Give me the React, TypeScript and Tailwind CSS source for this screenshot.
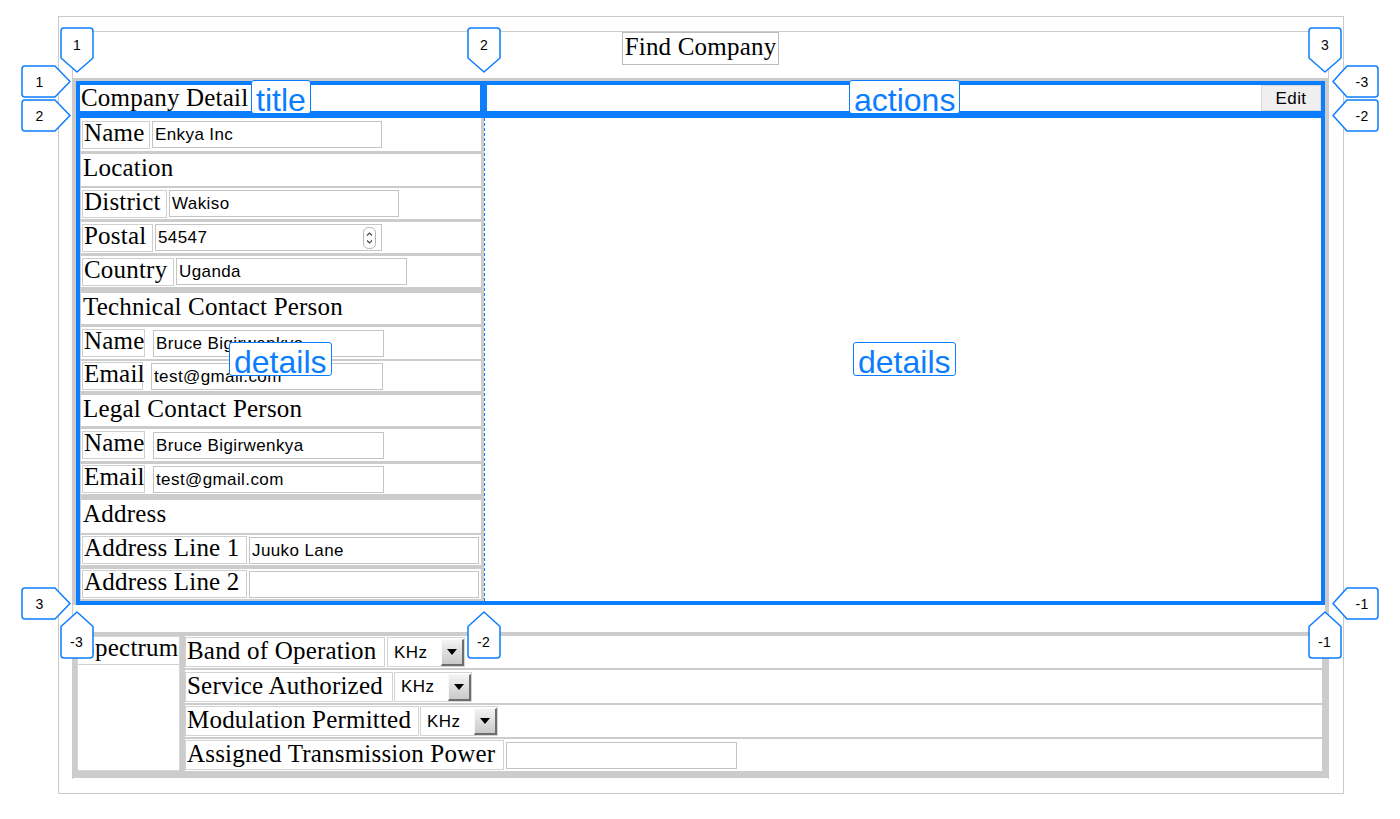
import React from 'react';

const SANS = "[font-family:'Liberation_Sans',Arial,sans-serif]";

type Row =
  | { kind: 'head'; label: string; box: string }
  | {
      kind: 'field';
      label: string;
      value: string;
      box: string;
      lw: string;
      gap: string;
      iw: string;
      spin?: boolean;
    };

const rows: Row[] = [
  { kind: 'field', label: 'Name', value: 'Enkya Inc', box: 'h-[33px]', lw: 'w-[68px]', gap: 'ml-[2px]', iw: 'w-[230px]' },
  { kind: 'head', label: 'Location', box: 'mt-[3px] h-[32px]' },
  { kind: 'field', label: 'District', value: 'Wakiso', box: 'mt-[2px] h-[31px]', lw: 'w-[85px]', gap: 'ml-[2px]', iw: 'w-[230px]' },
  { kind: 'field', label: 'Postal', value: '54547', box: 'mt-[3px] h-[31px]', lw: 'w-[71px]', gap: 'ml-[2px]', iw: 'w-[227px]', spin: true },
  { kind: 'field', label: 'Country', value: 'Uganda', box: 'mt-[3px] h-[31px]', lw: 'w-[92px]', gap: 'ml-[2px]', iw: 'w-[231px]' },
  { kind: 'head', label: 'Technical Contact Person', box: 'mt-[6px] h-[31px]' },
  { kind: 'field', label: 'Name', value: 'Bruce Bigirwenkya', box: 'mt-[3px] h-[32px]', lw: 'w-[63px]', gap: 'ml-[8px]', iw: 'w-[231px]' },
  { kind: 'field', label: 'Email', value: 'test@gmail.com', box: 'mt-[2px] h-[30px]', lw: 'w-[61px]', gap: 'ml-[8px]', iw: 'w-[232px]' },
  { kind: 'head', label: 'Legal Contact Person', box: 'mt-[4px] h-[31px]' },
  { kind: 'field', label: 'Name', value: 'Bruce Bigirwenkya', box: 'mt-[3px] h-[32px]', lw: 'w-[63px]', gap: 'ml-[8px]', iw: 'w-[231px]' },
  { kind: 'field', label: 'Email', value: 'test@gmail.com', box: 'mt-[3px] h-[30px]', lw: 'w-[63px]', gap: 'ml-[8px]', iw: 'w-[231px]' },
  { kind: 'head', label: 'Address', box: 'mt-[6px] h-[33px]' },
  { kind: 'field', label: 'Address Line 1', value: 'Juuko Lane', box: 'mt-[2px] h-[30px]', lw: 'w-[165px]', gap: 'ml-[2px]', iw: 'w-[230px]' },
  { kind: 'field', label: 'Address Line 2', value: '', box: 'mt-[4px] h-[30px]', lw: 'w-[165px]', gap: 'ml-[2px]', iw: 'w-[230px]' },
];

const spectrum = [
  { label: 'Band of Operation', box: 'h-[32px]', lw: 'w-[200px]', gap: 'ml-[2px]', select: true },
  { label: 'Service Authorized', box: 'h-[33px]', lw: 'w-[208px]', gap: 'ml-[1px]', select: true },
  { label: 'Modulation Permitted', box: 'h-[32px]', lw: 'w-[234px]', gap: 'ml-[1px]', select: true },
  { label: 'Assigned Transmission Power', box: 'h-[32px]', lw: 'w-[319px]', gap: 'ml-[2px]', select: false },
];

function Spinner() {
  return (
    <svg width="13" height="22" viewBox="0 0 13 22" className="mr-[5px]">
      <rect x="0.5" y="0.5" width="12" height="21" rx="5" fill="white" stroke="#b5b5b5" />
      <path d="M4 8.5L6.5 6L9 8.5" fill="none" stroke="#444" strokeWidth="1.1" />
      <path d="M4 13.5L6.5 16L9 13.5" fill="none" stroke="#444" strokeWidth="1.1" />
    </svg>
  );
}

function Select() {
  return (
    <div className={`w-[78px] h-[30px] bg-white border border-[#d4d4d4] flex items-end justify-between ${SANS}`}>
      <span className="self-center pl-[6px] text-[17px] leading-[19px] tracking-[0.4px]">KHz</span>
      <div className="w-[23px] h-[27px] flex items-center justify-center bg-[linear-gradient(#f3f3f3,#c9c9c9)] border-l border-t border-[#fafafa] border-r-2 border-b-2 border-r-[#6d6d6d] border-b-[#6d6d6d]">
        <svg width="10" height="6" viewBox="0 0 10 6">
          <path d="M0 0H10L5 6Z" fill="#000" />
        </svg>
      </div>
    </div>
  );
}

type Dir = 'down' | 'up' | 'left' | 'right';

function Badge({ n, dir, pos }: { n: string; dir: Dir; pos: string }) {
  const stroke = { fill: 'white', stroke: '#0b7dff', strokeWidth: 1.5, strokeLinejoin: 'round' as const };
  const txt = { fontSize: 14, fontFamily: 'Liberation Sans, Arial, sans-serif', fill: '#000', textAnchor: 'middle' as const };
  if (dir === 'down')
    return (
      <svg className={`absolute ${pos}`} width="34" height="46" viewBox="0 0 34 46">
        <path d="M1 4Q1 1 4 1H30Q33 1 33 4V31L17 45L1 31Z" {...stroke} />
        <text x="17" y="23" {...txt}>{n}</text>
      </svg>
    );
  if (dir === 'up')
    return (
      <svg className={`absolute ${pos}`} width="34" height="49" viewBox="0 0 34 49">
        <path d="M17 1L33 15.5V44Q33 47 30 47H4Q1 47 1 44V15.5Z" {...stroke} />
        <text x="16.5" y="36" {...txt}>{n}</text>
      </svg>
    );
  if (dir === 'right')
    return (
      <svg className={`absolute ${pos}`} width="51" height="34" viewBox="0 0 51 34">
        <path d="M4 1H34L49 16.5L34 32H4Q1 32 1 29V4Q1 1 4 1Z" {...stroke} />
        <text x="18.5" y="22" {...txt}>{n}</text>
      </svg>
    );
  return (
    <svg className={`absolute ${pos}`} width="49" height="34" viewBox="0 0 49 34">
      <path d="M2 16.5L16 1H44Q47 1 47 4V29Q47 32 44 32H16Z" {...stroke} />
      <text x="31" y="22" {...txt}>{n}</text>
    </svg>
  );
}

function AreaTag({ text, pos }: { text: string; pos: string }) {
  return (
    <div
      className={`absolute ${pos} h-[34px] px-[4px] bg-white border border-[#0b7dff] rounded-[3px] text-[32px] leading-[38px] tracking-normal text-[#0b7dff] whitespace-nowrap ${SANS}`}
    >
      {text}
    </div>
  );
}

export default function App() {
  return (
    <div className="relative w-[1400px] h-[819px] bg-white overflow-hidden text-black tracking-[0.2px] [font-family:'Liberation_Serif','Times_New_Roman',serif]">
      <div className="ml-[58px] mt-[16px] w-[1286px] h-[778px] border border-[#c9c9c9] pt-[14px] pl-[13px] pr-[14px] pb-[14px]">
        <div className="h-full border-x border-t border-[#cccccc] flex flex-col">
          {/* header */}
          <div className="h-[46px] flex justify-center items-start">
            <div className="h-[33px] border border-[#bcbcbc] px-[2px] text-[25px] leading-[27px]">Find Company</div>
          </div>

          {/* company grid */}
          <div className="h-[527px] border-t-[3px] border-x-[3px] border-[#cccccc]">
            <div className="h-full border-4 border-[#0b7dff] bg-[#0b7dff] grid grid-cols-[400px_1fr] grid-rows-[26px_1fr] gap-[7px]">
              <div className="bg-white text-[25px] leading-[26px] pl-[1px] whitespace-nowrap">Company Detail</div>
              <div className="bg-white flex justify-end">
                <button className={`w-[60px] h-full bg-[#efefef] border border-[#d8d8d8] text-[17px] leading-[19px] tracking-[0.4px] ${SANS}`}>
                  Edit
                </button>
              </div>
              <div className="col-span-2 bg-white flex">
                <div className="w-[404px] bg-[#cccccc] pl-[1px] pr-[3px] flex flex-col">
                  {rows.map((r, i) =>
                    r.kind === 'head' ? (
                      <div key={i} className={`${r.box} bg-white pl-[2px] text-[25px] leading-[27px] whitespace-nowrap`}>
                        {r.label}
                      </div>
                    ) : (
                      <div key={i} className={`${r.box} bg-white flex items-center pl-[1px]`}>
                        <div className={`${r.lw} h-[28px] border border-[#cfcfcf] pl-[1px] text-[25px] leading-[21px] whitespace-nowrap`}>
                          {r.label}
                        </div>
                        <div
                          className={`${r.gap} ${r.iw} h-[27px] border border-[#c4c4c4] flex items-center justify-between pl-[2px] text-[17px] leading-[19px] tracking-[0.4px] ${SANS}`}
                        >
                          <span>{r.value}</span>
                          {r.spin && <Spinner />}
                        </div>
                      </div>
                    ),
                  )}
                </div>
                <div className="flex-1 border-l border-dashed border-[#0b7dff]" />
              </div>
            </div>
          </div>

          <div className="h-[27px] border-r-[3px] border-[#cccccc]" />

          {/* spectrum */}
          <div className="h-[146px] bg-[#cccccc] pt-[4px] pl-[4px] pr-[6px] pb-[7px] flex gap-[5px]">
            <div className="w-[103px] bg-white border border-[#d6d6d6]">
              <div className="h-[28px] border-b border-[#cfcfcf] pl-[3px] text-[25px] leading-[22px]">Spectrum</div>
            </div>
            <div className="flex-1 flex flex-col gap-[2px]">
              {spectrum.map((s) => (
                <div key={s.label} className={`${s.box} bg-white flex items-center`}>
                  <div className={`${s.lw} h-[30px] border border-[#d2d2d2] pl-[1px] text-[25px] leading-[25px] whitespace-nowrap`}>
                    {s.label}
                  </div>
                  <div className={s.gap}>
                    {s.select ? <Select /> : <div className="w-[231px] h-[27px] border border-[#c4c4c4]" />}
                  </div>
                </div>
              ))}
            </div>
          </div>
        </div>
      </div>

      {/* grid inspector overlay */}
      <AreaTag text="title" pos="left-[251px] top-[80px]" />
      <AreaTag text="actions" pos="left-[849px] top-[80px]" />
      <AreaTag text="details" pos="left-[229px] top-[342px]" />
      <AreaTag text="details" pos="left-[853px] top-[342px]" />

      <Badge n="1" dir="down" pos="left-[60px] top-[27px]" />
      <Badge n="2" dir="down" pos="left-[467px] top-[27px]" />
      <Badge n="3" dir="down" pos="left-[1308px] top-[27px]" />

      <Badge n="1" dir="right" pos="left-[21px] top-[65px]" />
      <Badge n="2" dir="right" pos="left-[21px] top-[99px]" />
      <Badge n="3" dir="right" pos="left-[21px] top-[587px]" />

      <Badge n="-3" dir="left" pos="left-[1331px] top-[65px]" />
      <Badge n="-2" dir="left" pos="left-[1331px] top-[99px]" />
      <Badge n="-1" dir="left" pos="left-[1331px] top-[587px]" />

      <Badge n="-3" dir="up" pos="left-[60px] top-[611px]" />
      <Badge n="-2" dir="up" pos="left-[467px] top-[611px]" />
      <Badge n="-1" dir="up" pos="left-[1308px] top-[611px]" />
    </div>
  );
}
